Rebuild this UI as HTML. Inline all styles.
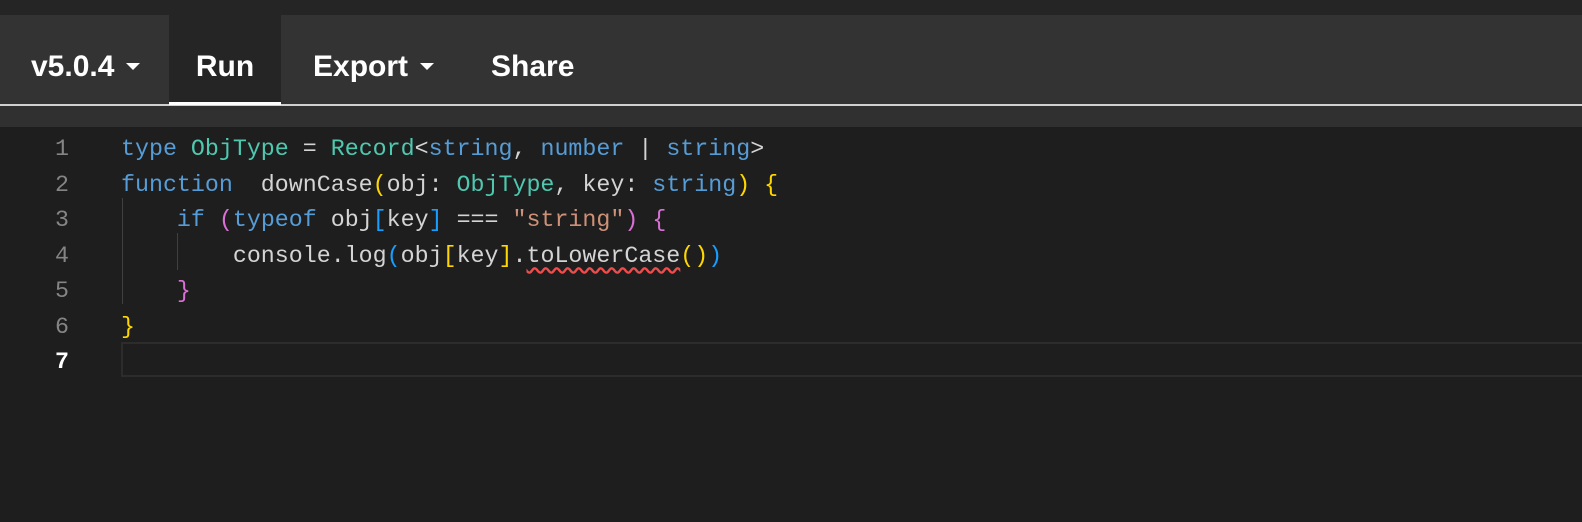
<!DOCTYPE html>
<html><head><style>
html,body{margin:0;padding:0;background:#1e1e1e;width:1582px;height:522px;overflow:hidden}
.top{position:absolute;left:0;top:0;width:1582px;height:15px;background:#252525}
.bar{position:absolute;left:0;top:15px;width:1582px;height:89px;background:#333333}
.line{position:absolute;left:0;top:104px;width:1582px;height:2px;background:#d0d0d0}
.strip{position:absolute;left:0;top:106px;width:1582px;height:21px;background:#303030}
.tab{position:absolute;top:15px;height:89px;line-height:103px;color:#fff;font-family:"Liberation Sans",sans-serif;font-weight:bold;font-size:30px;letter-spacing:0}
.run{left:169px;width:112px;background:#252525;text-align:center;border-bottom:3px solid #fff;height:87px;top:15px}
.caret{display:inline-block;width:0;height:0;border-left:7px solid transparent;border-right:7px solid transparent;border-top:7px solid #fff;vertical-align:middle;margin-left:12px;position:relative;top:-2px}
.ed{position:absolute;left:0;top:132px;font-family:"Liberation Mono",monospace;font-size:23.3px;color:#d4d4d4}
.ln{position:absolute;left:0;width:69px;text-align:right;color:#858585;height:35.5px;line-height:35.5px}
.cd{position:absolute;left:121px;white-space:pre;height:35.5px;line-height:35.5px}
.k{color:#569cd6}.t{color:#4ec9b0}.s{color:#ce9178}.y{color:#ffd700}.p{color:#da70d6}.b{color:#179fff}.f{color:#dcdcaa}
.sq{text-decoration:underline wavy #f14c4c;text-underline-offset:5px}
</style></head><body>
<div class="top"></div><div class="bar"></div><div class="line"></div><div class="strip"></div>
<div class="tab" style="left:31px">v5.0.4<span class="caret"></span></div>
<div class="tab run">Run</div>
<div class="tab" style="left:313px">Export<span class="caret"></span></div>
<div class="tab" style="left:491px">Share</div>
<div style="position:absolute;left:121px;top:342px;width:1470px;height:31px;border:2px solid #2c2c2c"></div>
<div style="position:absolute;left:122px;top:198px;width:1px;height:106px;background:#404040"></div>
<div style="position:absolute;left:177px;top:233px;width:1px;height:37px;background:#404040"></div>
<div class="ed">
<div class="ln" style="top:0">1</div><div class="cd" style="top:0"><span class="k">type</span> <span class="t">ObjType</span> = <span class="t">Record</span>&lt;<span class="k">string</span>, <span class="k">number</span> | <span class="k">string</span>&gt;</div>
<div class="ln" style="top:35.5px">2</div><div class="cd" style="top:35.5px"><span class="k">function</span>  downCase<span class="y">(</span>obj: <span class="t">ObjType</span>, key: <span class="k">string</span><span class="y">)</span> <span class="y">{</span></div>
<div class="ln" style="top:71px">3</div><div class="cd" style="top:71px">    <span class="k">if</span> <span class="p">(</span><span class="k">typeof</span> obj<span class="b">[</span>key<span class="b">]</span> === <span class="s">"string"</span><span class="p">)</span> <span class="p">{</span></div>
<div class="ln" style="top:106.5px">4</div><div class="cd" style="top:106.5px">        console.log<span class="b">(</span>obj<span class="y">[</span>key<span class="y">]</span>.<span class="sq">toLowerCase</span><span class="y">()</span><span class="b">)</span></div>
<div class="ln" style="top:142px">5</div><div class="cd" style="top:142px">    <span class="p">}</span></div>
<div class="ln" style="top:177.5px">6</div><div class="cd" style="top:177.5px"><span class="y">}</span></div>
<div class="ln" style="top:213px;color:#fff;font-weight:bold">7</div>
</div>
</body></html>
